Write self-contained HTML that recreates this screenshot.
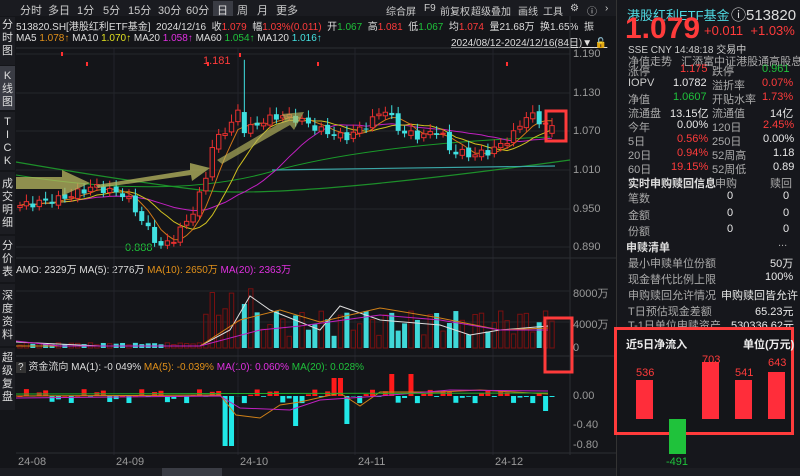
<!DOCTYPE html>
<html><head><meta charset="utf-8"><style>
*{margin:0;padding:0;box-sizing:border-box}
body{width:800px;height:476px;background:#141519;overflow:hidden;font-family:"Liberation Sans","Noto Sans CJK SC",sans-serif;color:#c8c8c8;position:relative;font-size:11px}
.a{position:absolute;white-space:nowrap}
.r{color:#ff3b3b}.g{color:#1fc23b}.c{color:#45e0e0}.w{color:#e8e8e8}.y{color:#e0e020}.o{color:#e0901a}.m{color:#e030e0}.gr{color:#9a9a9a}
.side{position:absolute;left:0;width:15px;background:#1c1d22;color:#ddd;font-size:11px;text-align:center;line-height:13px}
.rp div{position:absolute;white-space:nowrap;font-size:11px}
.tb{position:absolute;top:2px;color:#ccc;font-size:11px;white-space:nowrap}
.tr{position:absolute;top:3px;color:#ccc;font-size:10px;white-space:nowrap}
</style></head><body>
<div class="a" style="left:0;top:0;width:616px;height:16px;background:#1a1b20"></div>
<div class="tb" style="left:20px">分时</div><div class="tb" style="left:48px">多日</div><div class="tb" style="left:77px">1分</div><div class="tb" style="left:103px">5分</div><div class="tb" style="left:128px">15分</div><div class="tb" style="left:158px">30分</div><div class="tb" style="left:186px">60分</div>
<div class="a" style="left:213px;top:1px;width:20px;height:15px;background:#3a3c44"></div>
<div class="tb" style="left:217px;color:#ddd">日</div><div class="tb" style="left:237px">周</div><div class="tb" style="left:257px">月</div><div class="tb" style="left:276px">更多</div>
<div class="tr" style="left:386px">综合屏</div><div class="tr" style="left:424px">F9</div><div class="tr" style="left:440px">前复权</div><div class="tr" style="left:471px">超级叠加</div><div class="tr" style="left:518px">画线</div><div class="tr" style="left:543px">工具</div><div class="tr" style="left:570px">⚙</div><div class="tr" style="left:587px">ⓘ</div><div class="tr" style="left:605px">›</div>
<div class="a" style="left:16px;top:18px;color:#ddd;font-size:10px">513820.SH[港股红利ETF基金] &nbsp;2024/12/16 &nbsp;收<span class="r">1.079</span> &nbsp;幅<span class="r">1.03%(0.011)</span> &nbsp;开<span class="g">1.067</span> &nbsp;高<span class="r">1.081</span> &nbsp;低<span class="g">1.067</span> &nbsp;均<span class="r">1.074</span> &nbsp;量21.68万 &nbsp;换1.65% &nbsp;振</div>
<div class="a" style="left:16px;top:33px;color:#ddd;font-size:10px">MA5 <span class="o">1.078↑</span> MA10 <span class="y">1.070↑</span> MA20 <span class="m">1.058↑</span> MA60 <span class="g">1.054↑</span> MA120 <span class="c">1.016↑</span></div>
<div class="a" style="left:451px;top:34px;color:#ddd;text-decoration:underline;font-size:10px">2024/08/12-2024/12/16(84日)▼ <span style="color:#e0b000">🔓</span></div>
<div class="side" style="top:17px;height:48px;padding-top:2px">分<br>时<br>图</div>
<div class="side" style="top:66px;height:44px;background:#3a3c44;padding-top:4px">K<br>线<br>图</div>
<div class="side" style="top:112px;height:58px;padding-top:4px">T<br>I<br>C<br>K</div>
<div class="side" style="top:172px;height:62px;padding-top:6px">成<br>交<br>明<br>细</div>
<div class="side" style="top:236px;height:46px;padding-top:4px">分<br>价<br>表</div>
<div class="side" style="top:284px;height:62px;padding-top:6px">深<br>度<br>资<br>料</div>
<div class="side" style="top:348px;height:62px;padding-top:4px">超<br>级<br>复<br>盘</div>
<div class="a" style="left:16px;top:261px;color:#ddd;font-size:10px">AMO: 2329万 MA(5): 2776万 <span class="o">MA(10): 2650万</span> <span class="m">MA(20): 2363万</span></div>
<div class="a" style="left:16px;top:358px;color:#ddd;font-size:10px"><span style="background:#333;padding:0 2px">?</span> 资金流向 MA(1): -0.049% <span class="o">MA(5): -0.039%</span> <span class="m">MA(10): 0.060%</span> <span class="g">MA(20): 0.028%</span></div>
<div class="a gr" style="left:573px;top:48px">1.190</div>
<div class="a gr" style="left:573px;top:87px">1.130</div>
<div class="a gr" style="left:573px;top:125px">1.070</div>
<div class="a gr" style="left:573px;top:164px">1.010</div>
<div class="a gr" style="left:573px;top:203px">0.950</div>
<div class="a gr" style="left:573px;top:241px">0.890</div>
<div class="a gr" style="left:573px;top:285px">8000万</div>
<div class="a gr" style="left:573px;top:316px">4000万</div>
<div class="a gr" style="left:573px;top:342px">0</div>
<div class="a gr" style="left:573px;top:390px">0.00</div>
<div class="a gr" style="left:573px;top:419px">-0.40</div>
<div class="a gr" style="left:573px;top:439px">-0.80</div>
<div class="a gr" style="left:18px;top:456px">24-08</div>
<div class="a gr" style="left:116px;top:456px">24-09</div>
<div class="a gr" style="left:240px;top:456px">24-10</div>
<div class="a gr" style="left:358px;top:456px">24-11</div>
<div class="a gr" style="left:495px;top:456px">24-12</div>
<div class="a r" style="left:203px;top:55px;font-size:11px">1.181</div>
<div class="a g" style="left:125px;top:242px;font-size:11px">0.888</div>
<div class="a" style="left:0;top:468px;width:616px;height:8px;background:#1c1d22"></div>
<div class="a" style="left:162px;top:468px;width:60px;height:8px;background:#3a3c44"></div>
<svg class="a" id="ch" style="left:0;top:0" width="616" height="476"></svg>
<div class="a" style="left:616px;top:0;width:184px;height:476px;background:#16171c;border-left:1px solid #333"></div>
<div class="rp">
<div style="left:627px;top:5px;font-size:13px;color:#4fd8e0">港股红利ETF基金</div>
<div style="left:731px;top:4px;font-size:15px;color:#ddd">ⓘ513820</div>
<div style="left:625px;top:14px;font-size:30px;line-height:30px;color:#ff3b3b;font-weight:bold">1.079</div>
<div style="left:704px;top:23px;font-size:13px;color:#ff3b3b">+0.011 &nbsp;+1.03%</div>
<div style="left:628px;top:41px;font-size:10px;color:#ccc">SSE CNY 14:48:18 交易中</div>
<div style="left:628px;top:53px;color:#aaa">净值走势 &nbsp;&nbsp;汇添富中证港股通高股息</div>
<div style="left:628px;top:63px;color:#aaa">涨停</div><div style="left:680px;top:63px" class="r">1.175</div><div style="left:712px;top:63px;color:#aaa">跌停</div><div style="left:762px;top:63px" class="g">0.961</div>
<div style="left:628px;top:77px;color:#ccc">IOPV</div><div style="left:673px;top:77px" class="w">1.0782</div><div style="left:712px;top:77px;color:#aaa">溢折率</div><div style="left:762px;top:77px" class="r">0.07%</div>
<div style="left:628px;top:91px;color:#aaa">净值</div><div style="left:673px;top:91px" class="g">1.0607</div><div style="left:712px;top:91px;color:#aaa">开贴水率</div><div style="left:762px;top:91px" class="r">1.73%</div>
<div style="left:628px;top:105px;color:#aaa">流通盘</div><div style="left:670px;top:105px" class="w">13.15亿</div><div style="left:712px;top:105px;color:#aaa">流通值</div><div style="left:770px;top:105px" class="w">14亿</div>
<div style="left:628px;top:119px;color:#aaa">今年</div><div style="left:677px;top:119px" class="w">0.00%</div><div style="left:712px;top:119px;color:#aaa">120日</div><div style="left:763px;top:119px" class="r">2.45%</div>
<div style="left:628px;top:133px;color:#aaa">5日</div><div style="left:677px;top:133px" class="r">0.56%</div><div style="left:712px;top:133px;color:#aaa">250日</div><div style="left:763px;top:133px" class="w">0.00%</div>
<div style="left:628px;top:147px;color:#aaa">20日</div><div style="left:677px;top:147px" class="r">0.94%</div><div style="left:712px;top:147px;color:#aaa">52周高</div><div style="left:773px;top:147px" class="w">1.18</div>
<div style="left:628px;top:161px;color:#aaa">60日</div><div style="left:671px;top:161px" class="r">19.15%</div><div style="left:712px;top:161px;color:#aaa">52周低</div><div style="left:773px;top:161px" class="w">0.89</div>
<div style="left:628px;top:175px;color:#ddd;font-weight:bold">实时申购赎回信息</div><div style="left:715px;top:175px;color:#aaa">申购</div><div style="left:770px;top:175px;color:#aaa">赎回</div>
<div style="left:628px;top:190px;color:#aaa">笔数</div><div style="left:727px;top:190px" class="w">0</div><div style="left:783px;top:190px" class="w">0</div>
<div style="left:628px;top:207px;color:#aaa">金额</div><div style="left:727px;top:207px" class="w">0</div><div style="left:783px;top:207px" class="w">0</div>
<div style="left:628px;top:223px;color:#aaa">份额</div><div style="left:727px;top:223px" class="w">0</div><div style="left:783px;top:223px" class="w">0</div>
<div style="left:626px;top:239px;color:#ddd;font-weight:bold">申赎清单</div><div style="left:778px;top:237px;color:#aaa">...</div>
<div style="left:628px;top:255px;color:#aaa">最小申赎单位份额</div><div style="left:770px;top:255px" class="w">50万</div>
<div style="left:628px;top:271px;color:#aaa">现金替代比例上限</div><div style="left:765px;top:271px" class="w">100%</div>
<div style="left:628px;top:287px;color:#aaa">申购赎回允许情况</div><div style="left:721px;top:287px" class="w">申购赎回皆允许</div>
<div style="left:628px;top:303px;color:#aaa">T日预估现金差额</div><div style="left:755px;top:303px" class="w">65.23元</div>
<div style="left:628px;top:317px;color:#aaa">T-1日单位申赎资产</div><div style="left:731px;top:317px" class="w">530336.62元</div>
</div>
<div class="a" style="left:614px;top:327px;width:180px;height:108px;border:3px solid #ff3b3b;background:#141519"></div>
<div class="a" style="left:626px;top:336px;color:#eee;font-weight:bold">近5日净流入</div>
<div class="a" style="left:743px;top:336px;color:#eee;font-weight:bold">单位(万元)</div>
<div class="a" style="left:636px;top:380px;width:17px;height:39px;background:#ff2d3a"></div><div class="a r" style="left:636px;top:367px">536</div>
<div class="a" style="left:669px;top:419px;width:17px;height:35px;background:#1fc23b"></div><div class="a g" style="left:666px;top:456px">-491</div>
<div class="a" style="left:702px;top:362px;width:17px;height:57px;background:#ff2d3a"></div><div class="a r" style="left:702px;top:354px">703</div>
<div class="a" style="left:735px;top:380px;width:17px;height:39px;background:#ff2d3a"></div><div class="a r" style="left:735px;top:367px">541</div>
<div class="a" style="left:768px;top:372px;width:17px;height:47px;background:#ff2d3a"></div><div class="a r" style="left:768px;top:357px">643</div>
<div class="a" style="left:620px;top:468px;width:180px;height:8px;background:#1c1d22"></div>
<script>
(function(){
var s='',svg=document.getElementById('ch');
function L(x1,y1,x2,y2,c,w){s+='<line x1="'+x1+'" y1="'+y1+'" x2="'+x2+'" y2="'+y2+'" stroke="'+c+'" stroke-width="'+(w||1)+'"/>';}
function R(x,y,w,h,f,st){s+='<rect x="'+x+'" y="'+y+'" width="'+w+'" height="'+h+'" fill="'+f+'"'+(st?' stroke="'+st+'"':'')+'/>';}
[54,93,131,170,209,247].forEach(function(y){L(16,y,570,y,'#24262c');});
[114,238,355,493].forEach(function(x){L(x,48,x,455,'#22242a');});
L(570,16,570,455,'#2c2e34');L(16,48,570,48,'#2c2e34');L(16,258,616,258,'#2c2e34');L(16,356,616,356,'#2c2e34');L(16,453,616,453,'#2c2e34');
[291,322].forEach(function(y){L(16,y,570,y,'#24262c');});
var kp=[[20,0.955],[60,0.965],[95,0.985],[108,0.978],[125,0.972],[160,0.890],[175,0.905],[195,0.950],[205,0.995],[212,1.045],[222,1.068],[232,1.082],[237,1.105],[245,1.070],[262,1.085],[280,1.095],[300,1.088],[320,1.072],[345,1.060],[365,1.078],[385,1.105],[400,1.070],[420,1.062],[440,1.072],[450,1.040],[472,1.033],[492,1.040],[512,1.062],[528,1.098],[540,1.085],[552,1.079]];
function itp(x){for(var i=1;i<kp.length;i++){if(x<=kp[i][0]){var a=kp[i-1],b=kp[i];return a[1]+(b[1]-a[1])*(x-a[0])/(b[0]-a[0]);}}return 1.079;}
function Y(p){return 54+(1.190-p)*645;}
var N=84,cl=[],op=[],xs=[];
for(var i=0;i<N;i++){var x=20+i*(532/83);xs.push(x);var n=Math.sin(i*2.3)*0.006;cl.push(itp(x)+n);op.push(i?cl[i-1]+Math.cos(i*1.7)*0.003:0.952);}
cl[N-1]=1.079;op[N-1]=1.067;
function ma(k){return cl.map(function(v,i){var a=0,c=0;for(var j=Math.max(0,i-k+1);j<=i;j++){a+=cl[j];c++;}return a/c;});}
function pl(arr,c,f){var p='';arr.forEach(function(v,i){p+=(i?'L':'M')+xs[i].toFixed(1)+' '+f(v).toFixed(1);});s+='<path d="'+p+'" fill="none" stroke="'+c+'" stroke-width="1"/>';}
s+='<path d="M16 162 Q120 180 200 190 T570 160" fill="none" stroke="#1d8f2a" stroke-width="1.2"/>';
s+='<path d="M16 175 Q170 200 270 172 T550 137" fill="none" stroke="#1a9a2a" stroke-width="1"/>';
L(272,170,555,166,'#3aa6a6',1.2);
pl(ma(20),'#c020c0',Y);pl(ma(10),'#d0c020',Y);pl(ma(5),'#d07818',Y);
for(var i=0;i<N;i++){var o=op[i],c=cl[i],hi=Math.max(o,c)+0.006+Math.abs(Math.sin(i))*0.006,lo=Math.min(o,c)-0.006;
 if(i==35){hi=1.181;}if(i==22)lo=0.888;
 var up=c>=o,col=up?'#e8302f':'#40e0e0',x=xs[i];
 L(x,Y(hi),x,Y(lo),col);
 var y1=Y(Math.max(o,c)),h=Math.max(1,Y(Math.min(o,c))-y1);
 if(up)R(x-2.2,y1,4.4,h,'#16171c',col);else R(x-2.5,y1,5,h,col);}
s+='<polygon points="16,177 62,177 62,170 90,183 62,196 62,189 16,189" fill="#b8b860" opacity="0.75"/>';
s+='<polygon points="96,185 190,170 190,163 210,168 192,181 191,175 98,188" fill="#b8b860" opacity="0.75"/>';
s+='<polygon points="217,160 285,120 282,114 304,112 294,130 290,125 222,164" fill="#b8b860" opacity="0.65"/>';
[[87,62],[208,62],[318,62],[507,62],[62,52],[240,53]].forEach(function(p){L(p[0],p[1],p[0],p[1]+4,'#ff3030',2);});
var vb=348;
for(var i=0;i<N;i++){var x=xs[i],v;
 if(xs[i]<200)v=4+Math.abs(Math.sin(i*1.3))*3;else if(xs[i]<250)v=20+Math.abs(Math.sin(i*1.1))*55;else v=12+Math.abs(Math.sin(i*0.9))*38;
 if(i==36)v=80;
 var up=cl[i]>=op[i];
 if(up)R(x-2.2,vb-v*0.74,4.4,v*0.74,'none','#7a1010');else R(x-2.5,vb-v*0.74,5,v*0.74,'#40d8d8');}
s+='<path d="M16 342 L100 346 L200 346 L230 330 L250 296 L270 310 L300 322 L320 330 L340 306 L380 320 L440 325 L470 335 L500 330 L548 326" fill="none" stroke="#ddd" stroke-width="1"/>';
s+='<path d="M16 346 L200 346 L240 320 L280 310 L320 322 L380 308 L440 318 L500 330 L548 328" fill="none" stroke="#d08018" stroke-width="1"/>';
s+='<path d="M16 341 L60 346 L200 346 L260 330 L300 326 L380 315 L440 320 L500 330 L548 330" fill="none" stroke="#c020c0" stroke-width="1"/>';
var zb=396;
for(var i=0;i<N;i++){var x=xs[i],v=Math.sin(i*2.1)*5+Math.sin(i*0.7)*4;
 if(i==32||i==33)v=-50;if(i==43)v=-30;if(i==51)v=-28;if(i==58||i==61)v=22;if(i==49||i==50)v=18;if(i==82)v=-15;
 if(v>=0)R(x-2.5,zb-v,5,Math.max(1,v),'#ff1a1a');else R(x-2.5,zb,5,-v,'#20e8e8');}
s+='<path d="M16 396 L220 395 L236 415 L260 418 L280 405 L300 402 L340 393 L360 406 L380 392 L440 392 L480 390 L548 394" fill="none" stroke="#d08018"/>';
s+='<path d="M16 398 L220 396 L240 408 L290 410 L320 400 L380 396 L450 390 L548 391" fill="none" stroke="#c020c0"/>';
s+='<path d="M16 394 L548 393" fill="none" stroke="#1fb02a"/>';
s+='<rect x="546" y="111" width="20" height="30" fill="none" stroke="#ff3b3b" stroke-width="3"/>';
s+='<rect x="545" y="318" width="27" height="54" fill="none" stroke="#ff3b3b" stroke-width="3"/>';
s+='<rect x="707" y="76" width="86" height="15" fill="none" stroke="#ff3b3b" stroke-width="3"/>';
svg.innerHTML=s;
})();
</script>
</body></html>
